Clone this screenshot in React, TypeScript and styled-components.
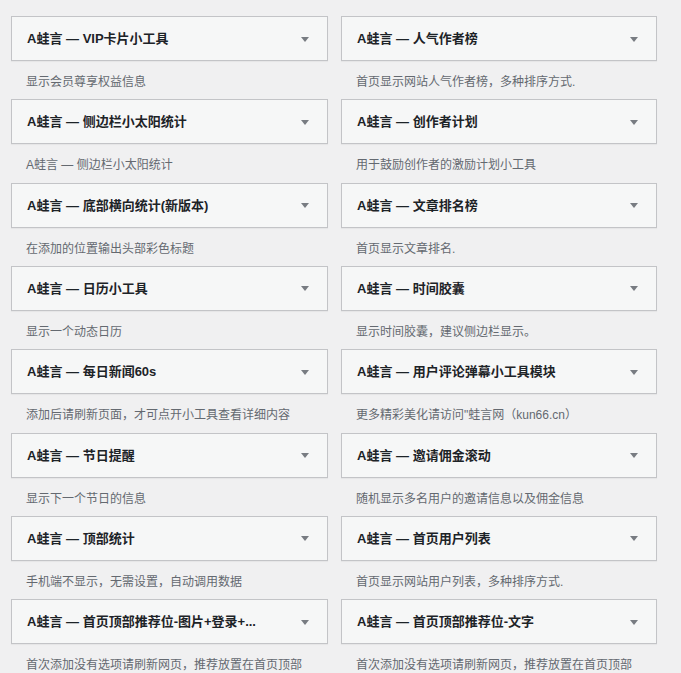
import React from 'react';
import { styled, createGlobalStyle } from 'styled-components';

const GlobalStyle = createGlobalStyle`
	html, body {
		margin: 0;
		padding: 0;
		background: #f0f0f1;
		font-family: 'Liberation Sans', 'Noto Sans CJK SC', sans-serif;
		color: #3c434a;
	}
`;

interface WidgetItem {
	title: string;
	description: string;
}

const widgets: WidgetItem[] = [
	{ title: 'VIP卡片小工具', description: '显示会员尊享权益信息' },
	{ title: '人气作者榜', description: '首页显示网站人气作者榜，多种排序方式.' },
	{ title: '侧边栏小太阳统计', description: 'A蛙言 — 侧边栏小太阳统计' },
	{ title: '创作者计划', description: '用于鼓励创作者的激励计划小工具' },
	{ title: '底部横向统计(新版本)', description: '在添加的位置输出头部彩色标题' },
	{ title: '文章排名榜', description: '首页显示文章排名.' },
	{ title: '日历小工具', description: '显示一个动态日历' },
	{ title: '时间胶囊', description: '显示时间胶囊，建议侧边栏显示。' },
	{ title: '每日新闻60s', description: '添加后请刷新页面，才可点开小工具查看详细内容' },
	{ title: '用户评论弹幕小工具模块', description: '更多精彩美化请访问"蛙言网（kun66.cn）' },
	{ title: '节日提醒', description: '显示下一个节日的信息' },
	{ title: '邀请佣金滚动', description: '随机显示多名用户的邀请信息以及佣金信息' },
	{ title: '顶部统计', description: '手机端不显示，无需设置，自动调用数据' },
	{ title: '首页用户列表', description: '首页显示网站用户列表，多种排序方式.' },
	{ title: '首页顶部推荐位-图片+登录+...', description: '首次添加没有选项请刷新网页，推荐放置在首页顶部' },
	{ title: '首页顶部推荐位-文字', description: '首次添加没有选项请刷新网页，推荐放置在首页顶部' },
];

const ArrowDown = () => (
	<svg width='8' height='5' viewBox='0 0 8 5'>
		<path d='M0 0 L8 0 L4 5 Z' fill='#787c82' />
	</svg>
);

export default function App() {
	return (
		<>
			<GlobalStyle />
			<WidgetList>
				{widgets.map((w, i) => (
					<Widget key={i}>
						<WidgetTop>
							<WidgetTitle>A蛙言 — {w.title}</WidgetTitle>
							<ToggleArrow>
								<ArrowDown />
							</ToggleArrow>
						</WidgetTop>
						<WidgetDescription>{w.description}</WidgetDescription>
					</Widget>
				))}
			</WidgetList>
		</>
	);
}

const WidgetList = styled.div`
	display: grid;
	grid-template-columns: 317px 316px;
	column-gap: 13px;
	padding: 16px 0 0 11px;
`;

const Widget = styled.div`
	display: flex;
	flex-direction: column;
`;

const WidgetTop = styled.div`
	height: 45px;
	box-sizing: border-box;
	background: #f6f7f7;
	border: 1px solid #c3c4c7;
	box-shadow: 0 1px 1px rgba(0, 0, 0, 0.04);
	display: flex;
	align-items: center;
	justify-content: space-between;
	padding: 0 18px 0 15px;
`;

const WidgetTitle = styled.h3`
	margin: 0;
	font-size: 13px;
	font-weight: 700;
	color: #1d2327;
	line-height: 1;
	white-space: nowrap;
`;

const ToggleArrow = styled.span`
	display: flex;
	align-items: center;
	margin-top: 1px;
`;

const WidgetDescription = styled.p`
	margin: 0;
	box-sizing: border-box;
	height: 38.33px;
	padding: 12px 0 0 15px;
	font-size: 12px;
	line-height: 19px;
	color: #646970;
	white-space: nowrap;
`;
